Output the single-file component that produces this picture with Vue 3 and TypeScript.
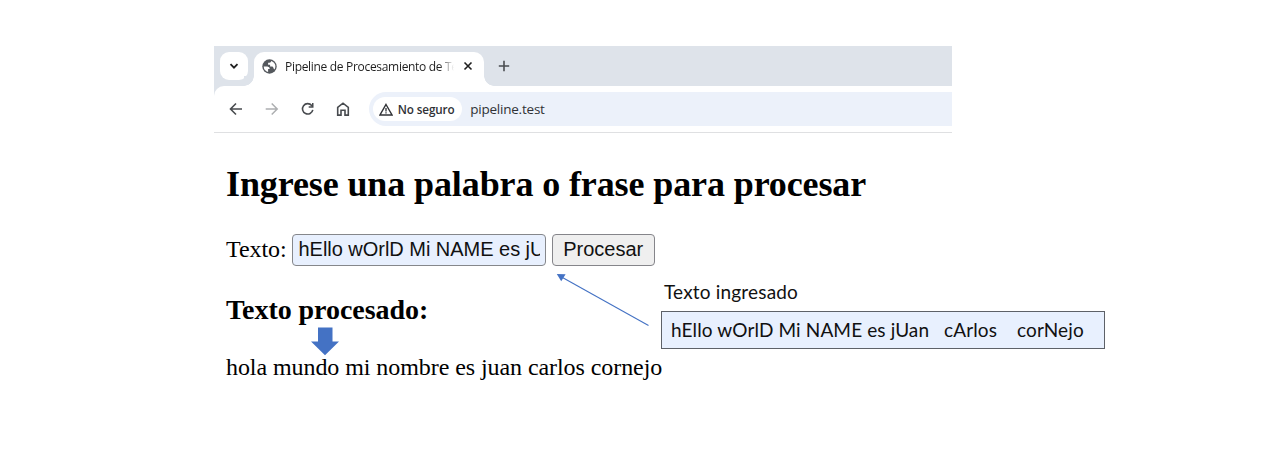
<script setup lang="ts">
import { ref } from 'vue'

const entered = ref('hEllo wOrlD Mi NAME es jUan   cArlos    corNejo')
const result = ref('hola mundo mi nombre es juan carlos cornejo')
</script>

<template>
  <main class="slide">
    <section class="browser">
      <header class="tabstrip">
        <button class="tab-search" aria-label="Buscar pestañas">
          <svg width="10" height="7" viewBox="0 0 10 7"><path d="M1.5 1.2 5 4.7 8.5 1.2" fill="none" stroke="#1f1f1f" stroke-width="1.8" /></svg>
        </button>
        <div class="tab">
          <svg class="globe" width="15" height="15" viewBox="0 0 15 15">
            <circle cx="7.5" cy="7.5" r="7.2" fill="#54585d" />
            <path d="M1.7 7.5H5.3Q7.8 7.6 7.8 10.1H6.1V12.9Q2 12 1.7 7.5ZM9.2 1.9Q9.1 3.7 7.4 3.7H6.1V5.7H8.1V7.4H10.2Q11.5 7.6 11.4 9.3L12.6 10.4Q14.5 6.5 12 3.7 10.8 2.3 9.2 1.9Z" fill="#fff" />
          </svg>
          <span class="tab-title">Pipeline de Procesamiento de Te</span>
          <svg class="close" width="10" height="10" viewBox="0 0 10 10"><path d="m1.5 1.5 7 7m0-7-7 7" stroke="#1f1f1f" stroke-width="1.6" /></svg>
        </div>
        <svg class="plus" width="12" height="12" viewBox="0 0 12 12"><path d="M6 .8v10.4M.8 6h10.4" stroke="#4a4d51" stroke-width="1.6" /></svg>
      </header>
      <nav class="toolbar">
        <svg width="14" height="14" viewBox="0 0 14 14"><path d="M13 7H1.8M7 1.5 1.5 7 7 12.5" fill="none" stroke="#484b4f" stroke-width="1.6" /></svg>
        <svg width="14" height="14" viewBox="0 0 14 14"><path d="M.7 7h11.2M6.7 1.5 12.2 7 6.7 12.5" fill="none" stroke="#adafb1" stroke-width="1.5" /></svg>
        <svg width="14" height="14" viewBox="0 0 14 14"><path d="M11.8 7.8A5.2 5.2 0 1 1 10.7 3.5L11.6 4.6" fill="none" stroke="#484b4f" stroke-width="1.6" /><path d="M12.5.9v4.9H7.7V4.3H11V.9Z" fill="#484b4f" /></svg>
        <svg width="14" height="14" viewBox="0 0 14 14"><path d="M1.7 5.4 7 1.2l5.3 4.2v7.7H9V8.2H5v4.9H1.7Z" fill="none" stroke="#484b4f" stroke-width="1.6" /></svg>
        <div class="address">
          <span class="security">
            <svg width="14" height="13" viewBox="0 0 14 13"><path d="M7 1.5 13 12H1Z" fill="none" stroke="#303236" stroke-width="1.4" /><path d="M7 5v3.5M7 9.3v1.3" stroke="#303236" stroke-width="1.3" /></svg>
            <b>No seguro</b>
          </span>
          <span class="url">pipeline.test</span>
        </div>
      </nav>
    </section>

    <section class="page">
      <h1>Ingrese una palabra o frase para procesar</h1>
      <form class="form" @submit.prevent>
        <label for="phrase">Texto:</label>
        <input id="phrase" v-model="entered" type="text" />
        <button class="submit" type="submit">Procesar</button>
      </form>
      <h2>Texto procesado:</h2>
      <p class="result">{{ result }}</p>
    </section>

    <svg class="down-arrow" width="28" height="29" viewBox="0 0 28 29">
      <path d="M7 .5h14.5V14.5H28L14 28.3 0 14.5h7Z" fill="#4472c4" />
    </svg>
    <svg class="pointer" width="94" height="54" viewBox="0 0 94 54">
      <path d="M92.5 52.5 6 4.2" stroke="#4472c4" stroke-width="1.1" />
      <path d="M.8 1 9.6 1.2 5.2 8.3Z" fill="#4472c4" />
    </svg>
    <aside class="callout">
      <p class="callout-title">Texto ingresado</p>
      <div class="callout-box"><span class="head">hEllo wOrlD Mi NAME es jUan</span><span class="second">cArlos</span><span class="third">corNejo</span></div>
    </aside>
  </main>
</template>

<style>
body { margin: 0; background: #fff; }
</style>

<style scoped>
* { box-sizing: border-box; }
.slide { position: relative; width: 1280px; height: 454px; overflow: hidden; padding: 46px 0 0 214px; background: #fff; }
svg { display: block; flex: none; }
.browser { width: 738px; height: 87px; border-bottom: 1px solid #dfe0e2; font-family: "Open Sans", "Noto Sans", sans-serif; }
.tabstrip { display: flex; align-items: flex-start; height: 40px; padding: 6px 0 0 6px; background: #dee3ea; }
.tab-search { display: flex; align-items: center; justify-content: center; width: 28px; height: 28px; padding: 1px 0 0; border: 0; border-radius: 9px; background: #fff; }
.tab { position: relative; display: flex; align-items: center; width: 230px; height: 34px; margin-left: 6px; padding: 0 11px 6px 8px; border-radius: 10px 10px 0 0; background: #fff; }
.tab::before, .tab::after { content: ""; position: absolute; bottom: 0; width: 10px; height: 10px; }
.tab::before { left: -10px; background: radial-gradient(circle at 0 0, #dee3ea 9.5px, #fff 10px); }
.tab::after { right: -10px; background: radial-gradient(circle at 100% 0, #dee3ea 9.5px, #fff 10px); }
.tab-title { width: 171px; margin-left: 8px; padding-top: 1px; color: #1f1f1f; font-size: 12px; line-height: 20px; letter-spacing: -.31px; white-space: nowrap; -webkit-mask-image: linear-gradient(90deg, #000 154px, transparent 169px); mask-image: linear-gradient(90deg, #000 154px, transparent 169px); }
.close { margin-left: 7px; }
.plus { margin: 8px 0 0 14px; }
.toolbar { position: relative; display: flex; align-items: center; gap: 21.8px; height: 46px; padding-left: 15px; border-radius: 10px 0 0; background: #fff; box-shadow: -5px -5px 0 5px #dee3ea; clip-path: inset(0); }
.address { display: flex; align-items: center; flex: 1; height: 34px; margin-left: -3px; padding-left: 4px; border-radius: 17px 0 0 17px; background: #ecf1fa; }
.security { display: flex; align-items: center; gap: 5px; width: 89px; height: 24px; padding-left: 5.6px; border-radius: 12px; background: #fff; color: #303236; font-size: 11.7px; white-space: nowrap; }
.security b { padding-bottom: 1px; font-weight: 600; letter-spacing: -.12px; }
.url { margin-left: 8px; color: #303236; font-size: 13.5px; letter-spacing: -.22px; }
.page { padding-left: 12px; color: #000; font-family: "Liberation Serif", "Times New Roman", serif; }
h1 { height: 40px; margin: 31px 0 0; font-size: 36px; line-height: 40px; letter-spacing: -.11px; white-space: nowrap; }
.form { display: flex; align-items: center; height: 32px; margin-top: 30px; font-size: 24px; line-height: 28px; }
.form label { width: 66px; padding-bottom: 2px; letter-spacing: -.08px; }
.form input { width: 254px; height: 32px; padding: 0 5px 2px 5.5px; border: 1px solid #85878b; border-radius: 4px; outline: 0; background: #e8f0fe; color: #111; font: 20px "Liberation Sans", Arial, sans-serif; letter-spacing: -.03px; }
.submit { width: 103.5px; height: 32px; margin-left: 5.5px; padding: 0 0 2px; border: 1px solid #85858a; border-radius: 4px; background: #efefef; color: #111; font: 20px "Liberation Sans", Arial, sans-serif; }
h2 { height: 32px; margin: 28px 0 0; font-size: 28px; line-height: 32px; letter-spacing: -.05px; }
.result { margin: 27px 0 0; font-size: 24px; line-height: 28px; letter-spacing: -.07px; }
.down-arrow { position: absolute; left: 311px; top: 327px; }
.pointer { position: absolute; left: 556px; top: 273px; }
.callout { position: absolute; left: 661px; top: 279px; width: 444px; font-family: Lato, sans-serif; font-size: 19px; letter-spacing: .12px; color: #111; }
.callout-title { height: 26px; margin: 0; padding-left: 3px; line-height: 26px; letter-spacing: .18px; }
.callout-box { display: flex; align-items: center; height: 38px; margin-top: 6px; padding: 0 9px 2px; border: 1px solid #5d6168; background: #e8f0fe; white-space: nowrap; }
.head { width: 273px; }
.second { width: 73px; }
</style>
